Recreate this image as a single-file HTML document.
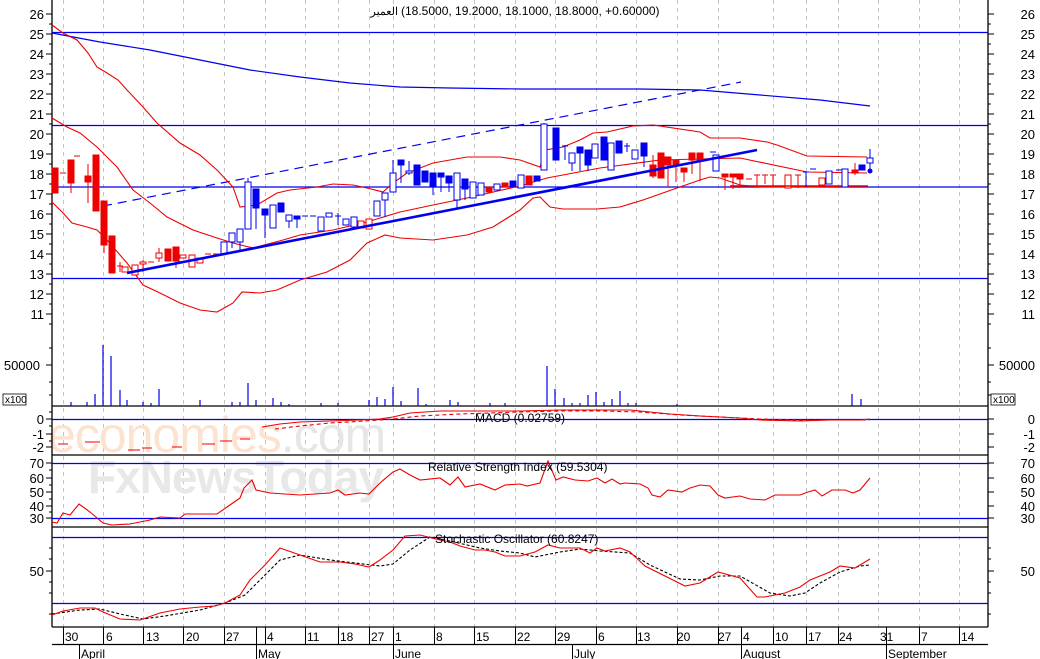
<!DOCTYPE html>
<html><head><meta charset="utf-8"><style>
html,body{margin:0;padding:0;background:#fff;width:1040px;height:659px;overflow:hidden}
svg{display:block;font-family:"Liberation Sans","Noto Sans CJK SC",sans-serif}
</style></head><body>
<svg width="1040" height="659" viewBox="0 0 1040 659" xmlns="http://www.w3.org/2000/svg">
<rect width="1040" height="659" fill="#fff"/>
<g stroke="#c4c4c4" stroke-dasharray="4,4" stroke-width="1">
<path d="M63.5 0V627M103.5 0V627M143.5 0V627M183.5 0V627M224.5 0V627M265.5 0V627M305.5 0V627M338.5 0V627M369.5 0V627M393.5 0V627M434.5 0V627M474.5 0V627M515.5 0V627M555.5 0V627M596.5 0V627M636.5 0V627M677.5 0V627M718.5 0V627M773.5 0V627M806.5 0V627M838.5 0V627M878.5 0V627M919.5 0V627M959.5 0V627"/>
</g>
<text x="48" y="452" font-size="50" fill="#fde2cf" letter-spacing="-1">economies<tspan fill="#e6e6e6">.com</tspan></text>
<text x="88" y="493" font-size="46" font-weight="bold" fill="#e8e8e8" letter-spacing="-1">FxNewsToday</text>
<g stroke="#000" stroke-width="1.3" fill="none">
<path d="M52 0V627M988 0V627M52 406H988M52 455H988M52 527H988M52 627H988M52 644.5H988"/>
</g>
<g stroke="#000" stroke-width="1">
<path d="M46 14H52M46 34H52M46 54H52M46 74H52M46 94H52M46 114H52M46 134H52M46 154H52M46 174H52M46 194H52M46 214H52M46 234H52M46 254H52M46 274H52M46 294H52M46 314H52M49 24H52M49 44H52M49 64H52M49 84H52M49 104H52M49 124H52M49 144H52M49 164H52M49 184H52M49 204H52M49 224H52M49 244H52M49 264H52M49 284H52M49 304H52M49 324H52M46 365H52M49 348H52M49 382H52M49 395H52M46 419H52M46 434H52M46 447H52M49 412H52M49 426H52M49 441H52M46 463H52M46 478H52M46 492H52M46 506H52M46 518H52M49 470H52M49 485H52M49 499H52M49 512H52M46 571H52M49 548H52M49 559H52M49 582H52M49 593H52M49 614H52"/>
<path d="M988 14H994M988 34H994M988 54H994M988 74H994M988 94H994M988 114H994M988 134H994M988 154H994M988 174H994M988 194H994M988 214H994M988 234H994M988 254H994M988 274H994M988 294H994M988 314H994M988 24H991M988 44H991M988 64H991M988 84H991M988 104H991M988 124H991M988 144H991M988 164H991M988 184H991M988 204H991M988 224H991M988 244H991M988 264H991M988 284H991M988 304H991M988 324H991M988 365H994M988 348H991M988 382H991M988 395H991M988 419H994M988 434H994M988 447H994M988 463H994M988 478H994M988 492H994M988 506H994M988 518H994M988 571H994M988 548H991M988 559H991M988 582H991M988 593H991M988 614H991"/>
</g>
<g font-size="13" fill="#000" text-anchor="end">
<text x="44" y="19">26</text><text x="44" y="39">25</text><text x="44" y="59">24</text><text x="44" y="79">23</text><text x="44" y="99">22</text><text x="44" y="119">21</text><text x="44" y="139">20</text><text x="44" y="159">19</text><text x="44" y="179">18</text><text x="44" y="199">17</text><text x="44" y="219">16</text><text x="44" y="239">15</text><text x="44" y="259">14</text><text x="44" y="279">13</text><text x="44" y="299">12</text><text x="44" y="319">11</text>
<text x="40" y="370">50000</text>
<text x="44" y="424">0</text><text x="44" y="439">-1</text><text x="44" y="452">-2</text>
<text x="44" y="468">70</text><text x="44" y="483">60</text><text x="44" y="497">50</text><text x="44" y="511">40</text><text x="44" y="523">30</text>
<text x="44" y="576">50</text>
</g>
<g font-size="13" fill="#000" text-anchor="end">
<text x="1035" y="19">26</text><text x="1035" y="39">25</text><text x="1035" y="59">24</text><text x="1035" y="79">23</text><text x="1035" y="99">22</text><text x="1035" y="119">21</text><text x="1035" y="139">20</text><text x="1035" y="159">19</text><text x="1035" y="179">18</text><text x="1035" y="199">17</text><text x="1035" y="219">16</text><text x="1035" y="239">15</text><text x="1035" y="259">14</text><text x="1035" y="279">13</text><text x="1035" y="299">12</text><text x="1035" y="319">11</text>
<text x="1035" y="370">50000</text>
<text x="1035" y="424">0</text><text x="1035" y="439">-1</text><text x="1035" y="452">-2</text>
<text x="1035" y="468">70</text><text x="1035" y="483">60</text><text x="1035" y="497">50</text><text x="1035" y="511">40</text><text x="1035" y="523">30</text>
<text x="1035" y="576">50</text>
</g>
<g font-size="10">
<rect x="3" y="394" width="23" height="11" fill="#fff" stroke="#000" stroke-width="0.8"/><text x="5" y="403">x100</text>
<rect x="991" y="394" width="24" height="11" fill="#fff" stroke="#000" stroke-width="0.8"/><text x="993" y="403">x100</text>
</g>
<text x="398" y="15" font-size="11" fill="#000" text-anchor="end">العمير</text>
<text x="401" y="15" font-size="12" fill="#000">(18.5000, 19.2000, 18.1000, 18.8000, +0.60000)</text>
<g stroke="#0000ee" stroke-width="1.3">
<path d="M52 32.5H988M52 125.5H988M52 187H988M52 278.5H988M52 419.5H988M52 463.5H988M52 518.5H988M52 537.5H988M52 603.5H988"/>
</g>
<polyline fill="none" stroke="#0000ee" stroke-width="1.2" points="52,33 100,42 150,50 200,60 250,70 300,77 350,83 400,87 450,88 520,89 640,89 700,90 760,95 820,100 870,106"/>
<line x1="103" y1="206" x2="741" y2="82" stroke="#0000ee" stroke-width="1.2" stroke-dasharray="9,6"/>
<g fill="none" stroke="#ee0000" stroke-width="1.1">
<polyline points="52,25 63,33 77,40 88,53 97,67 107,73 118,80 127,90 143,107 157,123 180,143 200,155 217,170 233,187 240,207 257,205 277,193 290,190 317,187 333,184 353,185 367,188 383,192 393,183 407,173 433,163 467,157 500,157 520,160 540,167 545,150 563,147 580,140 593,133 607,132 633,126 653,125 700,132 710,138 740,138 767,142 777,145 807,156 867,157"/>
<polyline points="52,118 67,127 80,133 97,147 117,167 133,190 150,203 167,217 193,230 217,238 233,243 253,248 283,240 300,235 333,230 367,222 400,212 433,205 467,198 520,186 547,178 600,168 660,160 740,158 807,172 867,173"/>
<polyline points="52,202 63,213 72,223 87,227 97,230 107,240 127,263 143,285 160,293 180,303 200,310 217,312 233,303 242,292 260,293 277,290 300,280 327,272 350,260 367,243 385,235 400,238 433,240 467,235 493,227 520,210 533,198 540,197 550,207 563,209 597,209 620,207 643,200 677,188 700,180 710,177 720,178 740,185 763,187 807,187 867,186"/>
</g>
<g fill="#ee0000" stroke="#ee0000" stroke-width="1">
<rect x="52" y="168" width="6" height="25"/><path d="M60 173H66"/>
<path d="M71 160V193"/><rect x="68" y="160" width="6" height="23"/><path d="M74 156H80"/>
<path d="M88 164V203"/><rect x="85" y="176" width="6" height="6"/>
<rect x="93" y="155" width="6" height="56"/>
<path d="M104 201V253"/><rect x="101" y="201" width="6" height="44"/>
<rect x="109" y="236" width="6" height="37"/>
<path d="M120 262V272M117 266H123"/>
<rect x="122" y="267" width="6" height="5" fill="#fff"/>
<rect x="132" y="265" width="6" height="10" fill="#fff"/>
<path d="M143 260V272"/><rect x="140" y="262" width="6" height="2" fill="#fff"/>
<path d="M148 262H154"/>
<path d="M159 248V262"/><rect x="156" y="253" width="6" height="5" fill="#fff"/>
<rect x="165" y="249" width="6" height="12"/>
<path d="M176 247V268"/><rect x="173" y="247" width="6" height="14"/>
<rect x="180" y="255" width="6" height="3" fill="#fff"/>
<rect x="189" y="255" width="6" height="12" fill="#fff"/>
<rect x="197" y="258" width="6" height="5" fill="#fff"/>
<path d="M205 254H211M213 254H219"/>
<rect x="358" y="221" width="6" height="7" fill="#fff"/>
<rect x="366" y="219" width="6" height="10" fill="#fff"/>
<rect x="486" y="187" width="6" height="5"/>
<rect x="502" y="183" width="6" height="4"/>
<rect x="526" y="176" width="6" height="9"/>
<path d="M653 155V178"/><rect x="650" y="165" width="6" height="11"/>
<rect x="658" y="153" width="6" height="25"/>
<path d="M668 157V187"/><rect x="665" y="157" width="6" height="8"/>
<path d="M676 160V182"/><rect x="673" y="160" width="6" height="5"/>
<path d="M684 168V182"/><rect x="681" y="168" width="6" height="4"/>
<path d="M692 153V174"/><rect x="689" y="153" width="6" height="7"/>
<path d="M700 153V181"/><rect x="697" y="153" width="6" height="7"/>
<path d="M725 174V190"/><rect x="722" y="174" width="6" height="3"/>
<path d="M733 174V189"/><rect x="730" y="174" width="6" height="3"/>
<path d="M740 174V187"/><rect x="737" y="174" width="6" height="5"/>
<path d="M746 179H752M757 175V187M754 175H760M765 175V184M762 175H768M773 175V187M770 175H776"/>
<rect x="785" y="175" width="6" height="13" fill="#fff"/>
<path d="M798 175V188M795 175H801"/>
<rect x="819" y="178" width="6" height="7" fill="#fff"/>
<path d="M855 163V175"/><rect x="852" y="170" width="6" height="3"/>
<path d="M730 186H868" stroke-width="1.5"/>
</g>
<g fill="#0000ee" stroke="#0000ee" stroke-width="1">
<rect x="221" y="242" width="6" height="12" fill="#fff"/>
<path d="M232 233V248"/><rect x="229" y="233" width="6" height="9" fill="#fff"/>
<path d="M240 229V252"/><rect x="237" y="229" width="6" height="13" fill="#fff"/>
<path d="M248 178V229"/><rect x="245" y="182" width="6" height="47" fill="#fff"/>
<path d="M256 189V229"/><rect x="253" y="189" width="6" height="19"/>
<path d="M265 209V238"/><rect x="262" y="209" width="6" height="6"/>
<rect x="270" y="205" width="6" height="23" fill="#fff"/>
<rect x="278" y="203" width="6" height="9"/>
<path d="M289 215V228"/><rect x="286" y="215" width="6" height="6" fill="#fff"/>
<path d="M297 216V228"/><rect x="294" y="216" width="6" height="3"/>
<path d="M302 216H308M310 216H316"/>
<rect x="318" y="217" width="6" height="14" fill="#fff"/>
<rect x="326" y="213" width="6" height="4" fill="#fff"/>
<path d="M338 213V225M335 216H341"/>
<rect x="343" y="219" width="6" height="6" fill="#fff"/>
<rect x="351" y="217" width="6" height="10" fill="#fff"/>
<rect x="374" y="201" width="6" height="15" fill="#fff"/>
<path d="M385 193V217"/><rect x="382" y="193" width="6" height="7" fill="#fff"/>
<path d="M393 160V192"/><rect x="390" y="173" width="6" height="19" fill="#fff"/>
<path d="M401 160V183"/><rect x="398" y="160" width="6" height="5"/>
<path d="M409 161V175"/><rect x="406" y="171" width="6" height="2" fill="#fff"/>
<rect x="414" y="165" width="6" height="20"/>
<rect x="422" y="171" width="6" height="11"/>
<path d="M433 173V195"/><rect x="430" y="173" width="6" height="13"/>
<path d="M441 173V192"/><rect x="438" y="173" width="6" height="4"/>
<path d="M449 176V192"/><rect x="446" y="176" width="6" height="7"/>
<path d="M457 173V208"/><rect x="454" y="173" width="6" height="27" fill="#fff"/>
<path d="M465 179V200"/><rect x="462" y="179" width="6" height="10"/>
<rect x="470" y="182" width="6" height="16" fill="#fff"/>
<rect x="478" y="183" width="6" height="12" fill="#fff"/>
<rect x="494" y="184" width="6" height="6" fill="#fff"/>
<rect x="510" y="181" width="6" height="5"/>
<rect x="518" y="175" width="6" height="13" fill="#fff"/>
<rect x="534" y="176" width="6" height="5"/>
<path d="M544 123V170"/><rect x="541" y="124" width="6" height="46" fill="#fff"/>
<rect x="553" y="128" width="6" height="32"/>
<path d="M565 145V160M562 146H568"/>
<path d="M572 153V171"/><rect x="569" y="153" width="6" height="10" fill="#fff"/>
<path d="M580 147V171"/><rect x="577" y="147" width="6" height="6"/>
<path d="M588 150V171"/><rect x="585" y="150" width="6" height="15"/>
<rect x="592" y="144" width="6" height="14" fill="#fff"/>
<rect x="601" y="137" width="6" height="23"/>
<rect x="608" y="143" width="6" height="27" fill="#fff"/>
<rect x="616" y="141" width="6" height="12"/>
<path d="M627 143V152M624 146H630"/>
<rect x="632" y="150" width="6" height="9" fill="#fff"/>
<path d="M644 143V167"/><rect x="641" y="143" width="6" height="13"/>
<rect x="713" y="155" width="6" height="16" fill="#fff"/>
<path d="M710 152H716"/>
<path d="M806 172V187M803 172H809M810 169H816"/>
<rect x="826" y="171" width="6" height="13" fill="#fff"/>
<path d="M836 170H842"/>
<rect x="842" y="169" width="6" height="18" fill="#fff"/>
<rect x="859" y="165" width="6" height="5"/>
<path d="M870 149V170"/><rect x="867" y="158" width="6" height="5" fill="#fff"/>
<circle cx="870" cy="171" r="2"/>
</g>
<line x1="127" y1="273" x2="757" y2="150" stroke="#0000ee" stroke-width="2.6"/>
<g stroke="#0000ee" stroke-width="1.2">
<path d="M71 406V402M87 406V402M95 406V394M103 406V345M111 406V356M120 406V390M127 406V400M143 406V402M151 406V403M159 406V389M200 406V400M232 406V402M240 406V402M248 406V383M256 406V400M273 406V398M281 406V402M289 406V404M321 406V403M338 406V403M369 406V400M377 406V397M385 406V399M393 406V387M401 406V401M418 406V388M426 406V404M450 406V400M458 406V402M490 406V403M505 406V403M547 406V366M555 406V389M564 406V398M572 406V403M580 406V403M588 406V395M596 406V392M604 406V402M612 406V399M620 406V391M628 406V403M636 406V403M677 406V404M852 406V394M861 406V399"/>
</g>
<g fill="none" stroke="#ee0000" stroke-width="1.1">
<polyline points="262,427 280,424 300,422 330,421 360,420 380,419 393,417 410,413 440,411 480,411 520,411 560,410 600,410 630,410 650,412 670,414 700,416 720,417 740,418 760,420 800,421 830,420 860,420 870,419"/>
<polyline stroke-dasharray="4,3" points="275,429 300,426 330,423 365,421 393,419 420,416 460,414 520,412 560,411 600,411 640,412 680,415 720,417 760,419 800,420 840,420 870,420"/>
<path d="M58 444H68M85 442H100M128 450H140M142 448H152M172 447H182M202 444H215M220 441H232M240 439H250"/>
</g>
<text x="475" y="422" font-size="12" fill="#000">MACD (0.02759)</text>
<polyline fill="none" stroke="#ee0000" stroke-width="1.1" points="52,522 57,523 63,513 70,515 79,504 90,512 103,523 112,525 130,524 150,520 160,517 180,518 185,514 217,514 230,505 240,498 244,488 252,480 256,490 270,493 300,495 330,493 338,490 345,495 360,493 369,494 380,483 393,472 400,469 410,475 420,480 440,478 450,485 458,477 465,487 480,484 495,490 505,485 520,484 527,486 540,483 548,461 556,480 563,477 575,480 588,481 597,478 605,483 612,479 620,484 625,483 640,484 648,488 652,495 660,497 668,490 682,492 690,488 700,485 710,486 718,495 725,498 740,496 750,499 765,500 775,495 800,495 808,492 815,490 822,496 832,490 845,490 853,493 860,490 870,478"/>
<text x="428" y="471" font-size="12" fill="#000">Relative Strength Index (59.5304)</text>
<polyline fill="none" stroke="#000" stroke-width="1.1" stroke-dasharray="3,2" points="52,614 80,610 100,609 120,614 143,619 165,616 200,610 225,603 245,595 260,580 280,560 300,555 330,560 355,563 380,566 393,564 410,550 430,537 450,541 480,548 500,551 520,553 535,557 560,552 580,549 600,551 630,553 650,565 680,579 700,580 720,576 740,576 770,593 790,596 805,593 820,583 840,572 860,566 870,565"/>
<polyline fill="none" stroke="#ee0000" stroke-width="1.1" points="52,615 63,611 80,608 95,608 103,612 120,619 140,620 160,613 180,609 200,607 215,606 225,603 240,595 250,580 265,565 280,548 300,555 320,562 340,562 355,564 369,567 380,560 393,550 405,536 420,535 440,540 450,542 460,546 475,550 485,550 495,552 505,556 520,556 535,552 548,545 560,548 580,548 590,553 597,548 605,551 620,548 630,552 645,566 685,586 700,583 718,572 740,578 757,597 765,597 785,593 800,587 810,580 830,572 840,566 855,568 870,559"/>
<text x="435" y="543" font-size="12" fill="#000">Stochastic Oscillator (60.8247)</text>
<g stroke="#000" stroke-width="1">
<path d="M63.5 627V644M79.5 644V659M103.5 627V644M143.5 627V644M183.5 627V644M224.5 627V644M256.5 627V644M256.5 644V659M265.5 627V644M305.5 627V644M338.5 627V644M369.5 627V644M393.5 627V659M434.5 627V644M474.5 627V644M515.5 627V644M555.5 627V644M572.5 644V659M596.5 627V644M636.5 627V644M677.5 627V644M718.5 627V644M741.5 627V659M773.5 627V644M806.5 627V644M838.5 627V644M886.5 627V659M919.5 627V644M959.5 627V644"/>
</g>
<g font-size="12" fill="#000">
<text x="65" y="641">30</text><text x="106" y="641">6</text><text x="146" y="641">13</text><text x="186" y="641">20</text><text x="226" y="641">27</text><text x="267" y="641">4</text><text x="307" y="641">11</text><text x="340" y="641">18</text><text x="371" y="641">27</text><text x="395" y="641">1</text><text x="436" y="641">8</text><text x="476" y="641">15</text><text x="517" y="641">22</text><text x="557" y="641">29</text><text x="598" y="641">6</text><text x="637" y="641">13</text><text x="677" y="641">20</text><text x="718" y="641">27</text><text x="743" y="641">4</text><text x="775" y="641">10</text><text x="808" y="641">17</text><text x="839" y="641">24</text><text x="880" y="641">31</text><text x="921" y="641">7</text><text x="961" y="641">14</text>
<text x="81" y="658">April</text><text x="258" y="658">May</text><text x="395" y="658">June</text><text x="574" y="658">July</text><text x="743" y="658">August</text><text x="888" y="658">September</text>
</g>
</svg>
</body></html>
